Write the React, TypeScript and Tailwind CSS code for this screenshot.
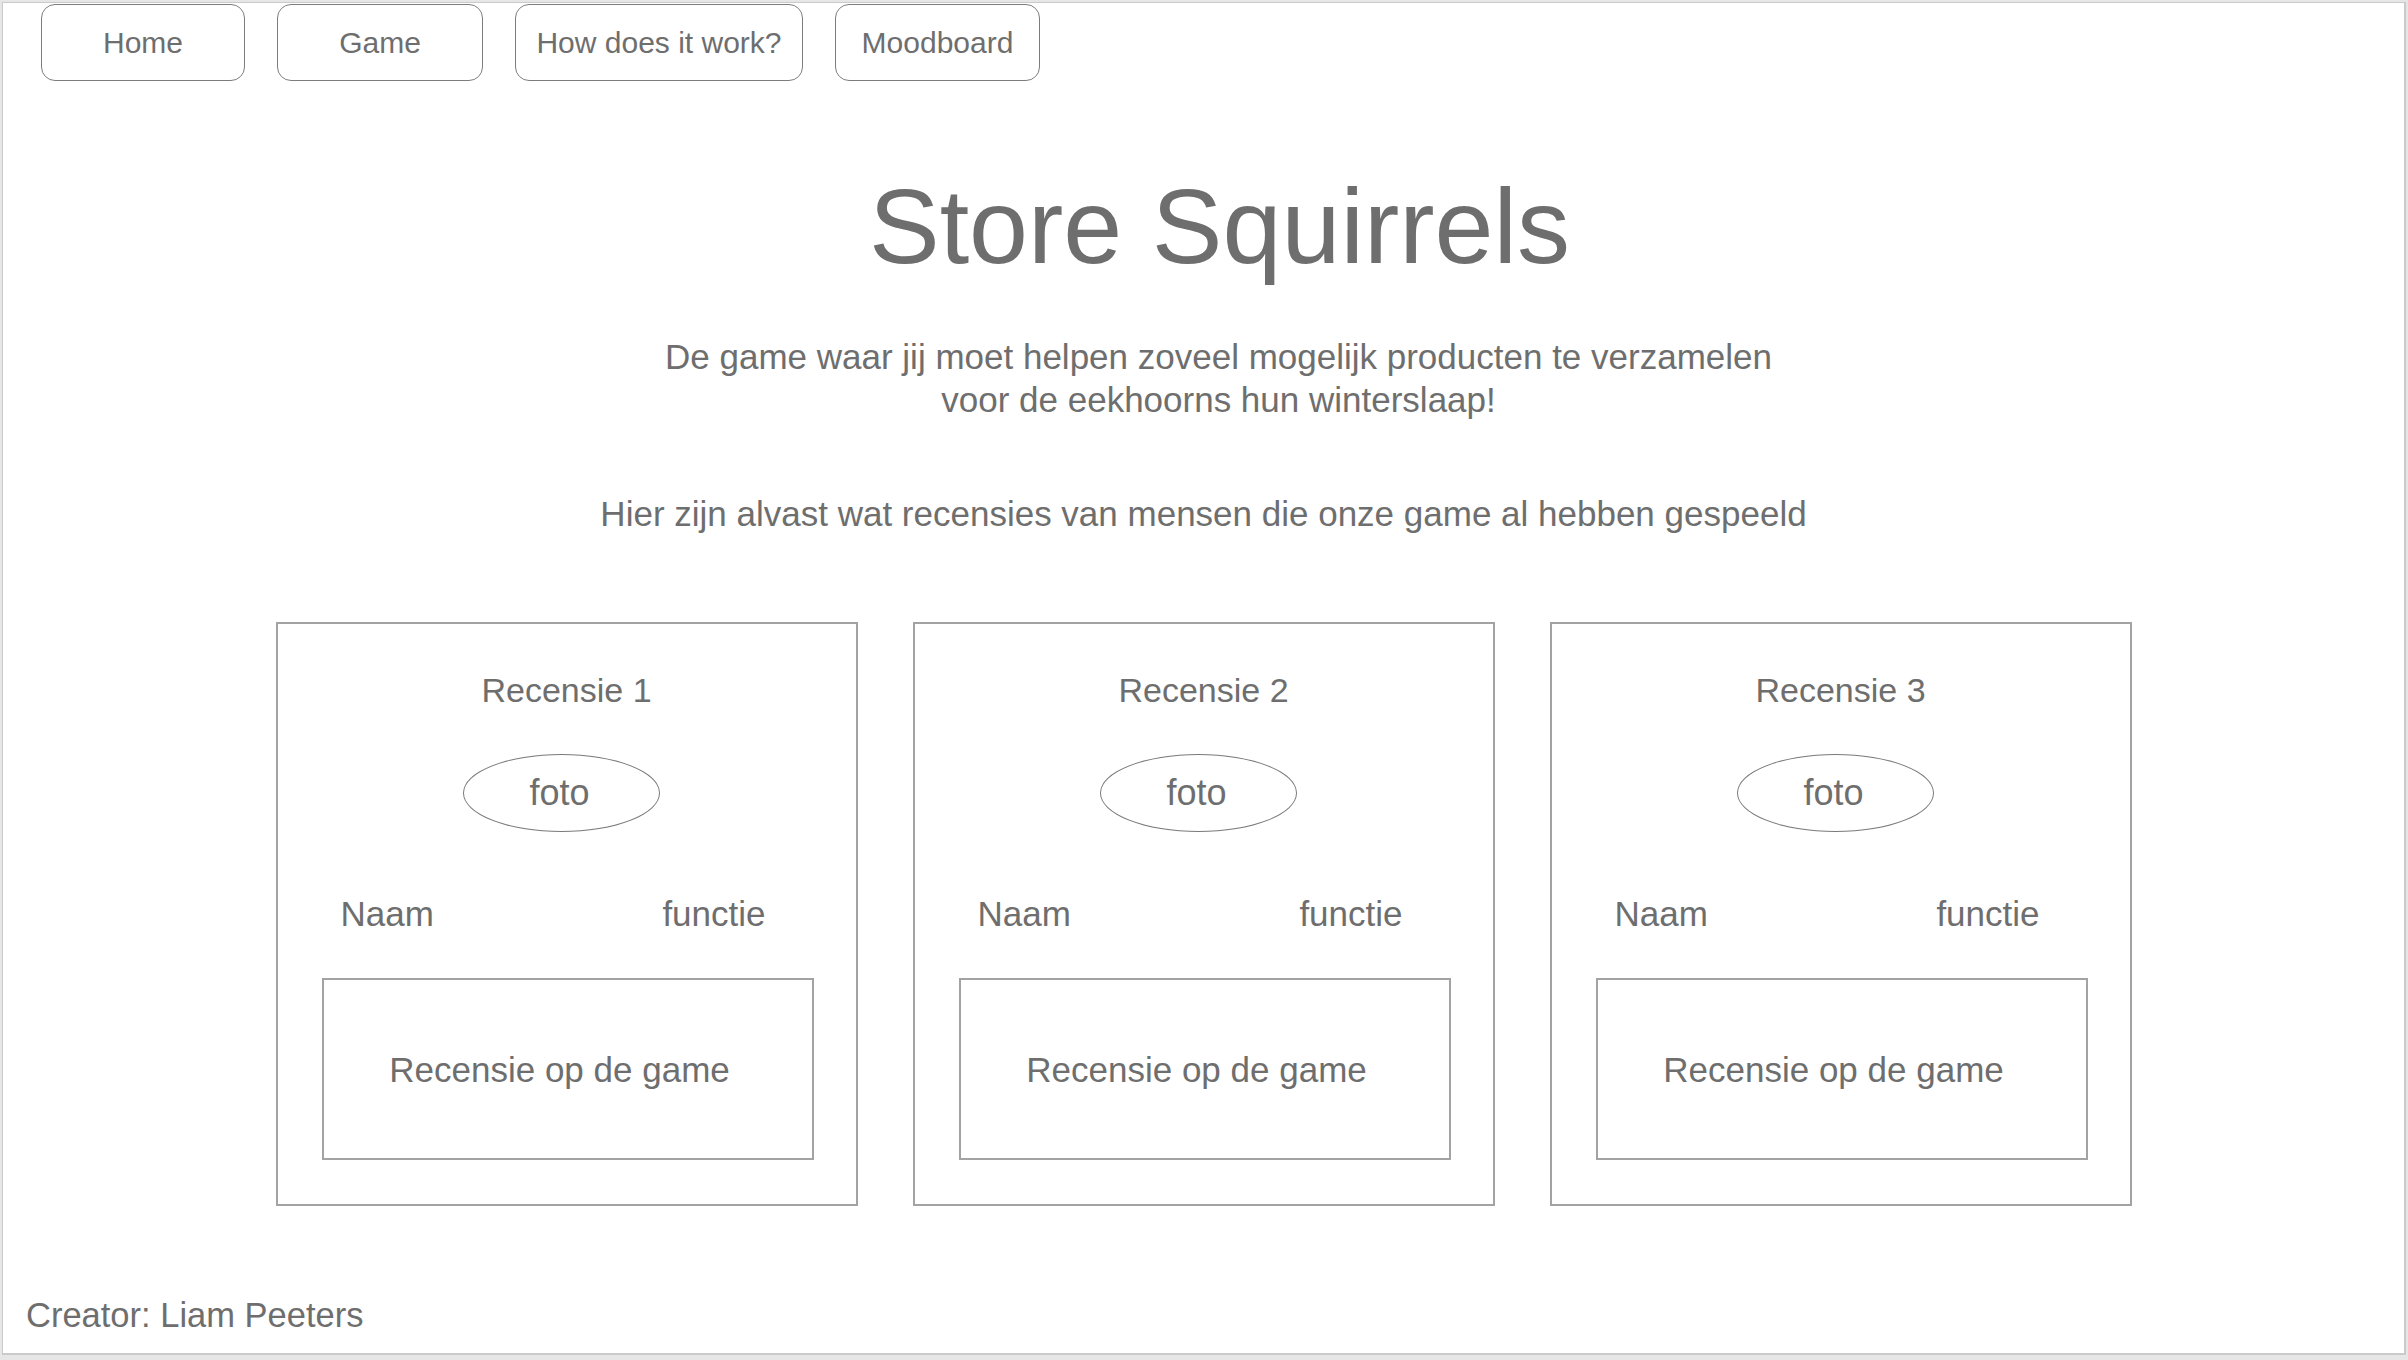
import React from "react";

const font = { fontFamily: '"Liberation Sans", Arial, Helvetica, sans-serif' };

function NavButton({ label, w }: { label: string; w: string }) {
  return (
    <div
      className={`${w} h-[77px] rounded-[14px] border border-[#7d7d7d] flex items-center justify-center text-[30px] leading-none text-[#6e6e6e]`}
    >
      {label}
    </div>
  );
}

function Card({ n }: { n: number }) {
  return (
    <div className="w-[582px] h-[584px] border-2 border-[#a3a3a3] flex flex-col items-stretch">
      <div className="mt-[46px] text-center text-[34px] leading-[40px] text-[#6e6e6e]">
        Recensie {n}
      </div>
      <div className="mt-[44px] flex justify-center pr-[10px]">
        <div className="w-[197px] h-[78px] rounded-[50%] border border-[#7a7a7a] flex items-center justify-center pr-[4px] text-[36px] leading-none text-[#6e6e6e]">
          foto
        </div>
      </div>
      <div className="mt-[60px] flex justify-between pl-[63px] pr-[90px] text-[35px] leading-[43px] text-[#6e6e6e]">
        <span>Naam</span>
        <span>functie</span>
      </div>
      <div className="mt-[43px] ml-[44px] w-[492px] h-[182px] border-2 border-[#a3a3a3] flex items-center justify-center pr-[16px] text-[35px] leading-[43px] text-[#6e6e6e]">
        Recensie op de game
      </div>
    </div>
  );
}

export default function App() {
  return (
    <div className="w-[2408px] h-[1360px] bg-[#e6e6e6] pt-[2px] pl-[2px]" style={font}>
      <div className="w-[2404px] h-[1353px] bg-white border-t border-l border-r-2 border-b-2 border-[#cacaca] flex flex-col">
        <nav className="mt-[1px] pl-[38px] flex gap-[32px]">
          <NavButton label="Home" w="w-[204px]" />
          <NavButton label="Game" w="w-[206px]" />
          <NavButton label="How does it work?" w="w-[288px]" />
          <NavButton label="Moodboard" w="w-[205px]" />
        </nav>

        <h1 className="mt-[92px] pl-[32px] text-center text-[106px] leading-none text-[#6e6e6e]">
          Store Squirrels
        </h1>

        <p className="mt-[56px] pl-[30px] text-center text-[35px] leading-[43px] text-[#6e6e6e]">
          De game waar jij moet helpen zoveel mogelijk producten te verzamelen
          <br />
          voor de eekhoorns hun winterslaap!
        </p>

        <p className="mt-[71px] text-center text-[35px] leading-[43px] text-[#6e6e6e]">
          Hier zijn alvast wat recensies van mensen die onze game al hebben gespeeld
        </p>

        <div className="mt-[87px] flex justify-center gap-[55px]">
          <Card n={1} />
          <Card n={2} />
          <Card n={3} />
        </div>

        <div className="mt-[88px] pl-[23px] text-[34.5px] leading-[43px] text-[#6e6e6e]">
          Creator: Liam Peeters
        </div>
      </div>
    </div>
  );
}
